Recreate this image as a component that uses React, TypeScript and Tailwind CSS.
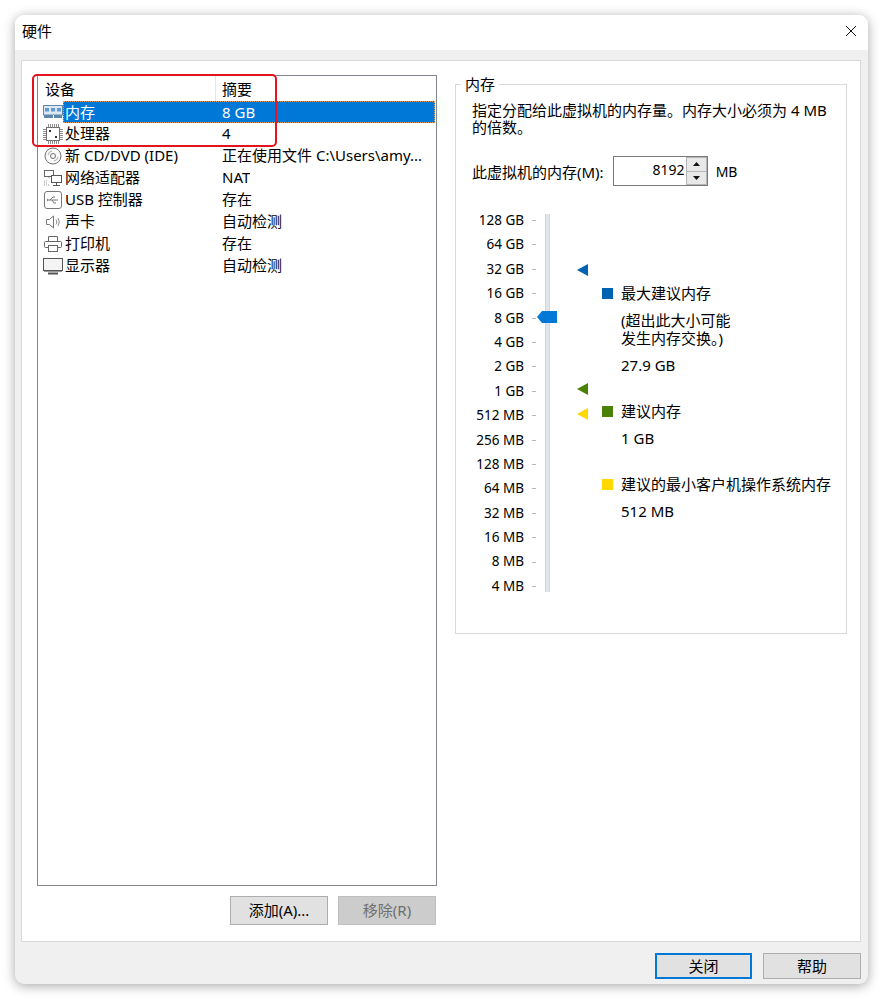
import React from "react";

const Ram = () => (
  <svg width="20" height="14" viewBox="0 0 20 14" fill="none" className="shrink-0">
    <rect x="0.5" y="0.5" width="19" height="9.500" fill="#dce9f5" stroke="#5f86ab" />
    <rect x="2" y="3" width="4" height="3.500" fill="#5f9ad6" />
    <rect x="8" y="3" width="4" height="3.500" fill="#5f9ad6" />
    <rect x="14" y="3" width="4" height="3.500" fill="#5f9ad6" />
    <path d="M1 11.500h18" stroke="#5f86ab" strokeWidth="3" />
    <path d="M10.500 10v4" stroke="#fff" />
  </svg>
);
const Cpu = () => (
  <svg width="20" height="20" viewBox="0 0 20 20" fill="none" className="shrink-0">
    <rect x="3.500" y="3.500" width="13" height="13" fill="#fff" stroke="#6f6f6f" />
    <path d="M5.500 0v3M7.500 0v3M9.500 0v3M11.500 0v3M13.500 0v3M15.500 0v3M5.500 17v3M7.500 17v3M9.500 17v3M11.500 17v3M13.500 17v3M15.500 17v3M0 5.500h3M0 7.500h3M0 9.500h3M0 11.500h3M0 13.500h3M0 15.500h3M17 5.500h3M17 7.500h3M17 9.500h3M17 11.500h3M17 13.500h3M17 15.500h3" stroke="#8f8f8f" />
    <rect x="6" y="6" width="2" height="2" fill="#333" />
    <rect x="12" y="12" width="2" height="2" fill="#333" />
  </svg>
);
const Disc = () => (
  <svg width="18" height="18" viewBox="0 0 18 18" fill="none" className="shrink-0">
    <circle cx="9" cy="9" r="8" fill="#fafafa" stroke="#707070" />
    <circle cx="9" cy="9" r="2.500" stroke="#707070" />
    <path d="M4 8a5 5 0 0 1 4-4M14 10a5 5 0 0 1-4 4" stroke="#a8a8a8" />
  </svg>
);
const Net = () => (
  <svg width="20" height="18" viewBox="0 0 20 18" fill="none" className="shrink-0">
    <rect x="1.500" y="1.500" width="9" height="6" fill="#fff" stroke="#666" />
    <path d="M6 8v2M1 12h4M1 14h4M1 16h6" stroke="#9a9a9a" strokeDasharray="1 1" />
    <rect x="8.500" y="6.500" width="10" height="7" fill="#fff" stroke="#555" />
    <path d="M13.500 14v2M10 16.500h7" stroke="#555" />
  </svg>
);
const Usb = () => (
  <svg width="18" height="18" viewBox="0 0 18 18" fill="none" className="shrink-0">
    <rect x="0.500" y="0.500" width="17" height="17" rx="2.500" fill="#fff" stroke="#777" />
    <path d="M4 9h10M6 9l3-3h2M8 9l2 3h2" stroke="#777" />
    <path d="M4 7.500v3l-1.500-1.500z" fill="#777" />
  </svg>
);
const Speaker = () => (
  <svg width="16" height="16" viewBox="0 0 16 16" fill="none" className="shrink-0">
    <path d="M1.500 5.500h3l4-3.500v12l-4-3.500h-3z" fill="#fff" stroke="#777" />
    <path d="M11 5.500c1 1.500 1 3.500 0 5M13 4c1.500 2.500 1.500 5.500 0 8" stroke="#8a8a8a" />
  </svg>
);
const Printer = () => (
  <svg width="18" height="16" viewBox="0 0 18 16" fill="none" className="shrink-0">
    <path d="M4.500 5V.5h9V5" stroke="#666" fill="#fff" />
    <rect x="0.500" y="5.500" width="17" height="6" rx="1" fill="#fff" stroke="#666" />
    <rect x="4.500" y="9.500" width="9" height="6" fill="#fff" stroke="#666" />
  </svg>
);
const Monitor = () => (
  <svg width="20" height="17" viewBox="0 0 20 17" fill="none" className="shrink-0">
    <rect x="0.500" y="0.500" width="19" height="12" fill="#f4f4f4" stroke="#555" />
    <path d="M5 15.500h10" stroke="#555" strokeWidth="2" />
    <path d="M1 13.500h18" stroke="#999" />
  </svg>
);

const rows: { name: string; value: string; icon: React.ReactNode; sel?: boolean }[] = [
  { name: "内存", value: "8 GB", icon: <Ram />, sel: true },
  { name: "处理器", value: "4", icon: <Cpu /> },
  { name: "新 CD/DVD (IDE)", value: "正在使用文件 C:\\Users\\amy...", icon: <Disc /> },
  { name: "网络适配器", value: "NAT", icon: <Net /> },
  { name: "USB 控制器", value: "存在", icon: <Usb /> },
  { name: "声卡", value: "自动检测", icon: <Speaker /> },
  { name: "打印机", value: "存在", icon: <Printer /> },
  { name: "显示器", value: "自动检测", icon: <Monitor /> },
];

const sizes = ["128 GB","64 GB","32 GB","16 GB","8 GB","4 GB","2 GB","1 GB","512 MB","256 MB","128 MB","64 MB","32 MB","16 MB","8 MB","4 MB"];

const Tri = ({ color, top }: { color: string; top: number }) => (
  <svg width="12" height="12" viewBox="0 0 12 12" className="absolute left-[45px]" style={{ top }}>
    <path d="M0 6L11 0V12Z" fill={color} />
  </svg>
);

export default function App() {
  return (
    <div className="w-[883px] h-[1001px] bg-white pt-[15px] pl-[15px] text-[15px] leading-[20px] text-black font-['Noto_Sans','Noto_Sans_CJK_SC',sans-serif]">
      <div className="relative w-[853px] h-[969px] rounded-[9px] bg-[#f0f0f0] flex flex-col overflow-hidden shadow-[0_2px_12px_rgba(0,0,0,0.35)]">
        <div className="h-[35px] bg-white flex items-center justify-between pl-[7px] pr-[11px] pb-[3px] shrink-0">
          <span>硬件</span>
          <svg width="12" height="12" viewBox="0 0 12 12">
            <path d="M1 1l10 10M11 1L1 11" stroke="#111" strokeWidth="1" />
          </svg>
        </div>
        <div className="mt-[10px] ml-[6px] w-[840px] h-[882px] bg-white border border-[#d9d9d9] flex shrink-0">
          <div className="ml-[15px] mt-[14px] w-[400px] flex flex-col shrink-0">
            <div className="h-[811px] border border-[#828790] flex flex-col">
              <div className="h-[25px] flex items-center shrink-0">
                <div className="w-[178px] h-full pl-[7px] flex items-center border-r border-[#e5e5e5]">设备</div>
                <div className="pl-[6px]">摘要</div>
              </div>
              {rows.map((r) => (
                <div key={r.name} className="h-[22px] flex items-center shrink-0">
                  <div className="w-[25px] flex items-center justify-center pl-[5px] shrink-0">{r.icon}</div>
                  <div className={r.sel ? "flex-1 mr-[1px] h-[22px] flex items-center bg-[#0078d7] text-white border border-dotted border-[#e8a060]" : "flex-1 flex items-center pb-[2px]"}>
                    <div className={r.sel ? "w-[156px] pl-[1px]" : "w-[157px] pl-[2px]"}>{r.name}</div>
                    <div className="truncate pl-[2px]">{r.value}</div>
                  </div>
                </div>
              ))}
            </div>
            <div className="mt-[10px] flex justify-end gap-[10px] pr-[1px]">
              <div className="w-[98px] h-[29px] pb-[2px] bg-[#e1e1e1] border border-[#adadad] flex items-center justify-center">添加(A)...</div>
              <div className="w-[98px] h-[29px] pb-[2px] bg-[#cccccc] border border-[#bfbfbf] text-[#6f6f6f] flex items-center justify-center">移除(R)</div>
            </div>
          </div>
          <div className="relative ml-[18px] mt-[23px] w-[392px] h-[550px] border border-[#d9d9d9] shrink-0 px-[16px]">
            <span className="absolute left-[5px] top-[-11px] bg-white px-[4px]">内存</span>
            <p className="mt-[17px] leading-[17px] w-[360px]">指定分配给此虚拟机的内存量。内存大小必须为 4 MB 的倍数。</p>
            <div className="mt-[20px] flex items-center h-[30px]">
              <span className="pt-[2px]">此虚拟机的内存(M):</span>
              <div className="ml-[9px] w-[95px] h-[30px] border border-[#7a7a7a] flex bg-white text-[14px]">
                <div className="flex-1 text-right pr-[1px] leading-[25px]">8192</div>
                <div className="w-[21px] flex flex-col gap-[1px] p-[1px] bg-[#b5b5b5] shrink-0">
                  <div className="flex-1 bg-[#e8e8e8] flex items-center justify-center"><svg width="7" height="4"><path d="M3.500 0L7 4H0z" fill="#111" /></svg></div>
                  <div className="flex-1 bg-[#e8e8e8] flex items-center justify-center"><svg width="7" height="4"><path d="M0 0H7L3.500 4z" fill="#111" /></svg></div>
                </div>
              </div>
              <span className="ml-[8px] pt-[2px] text-[14px]">MB</span>
            </div>
            <div className="mt-[28px] flex">
              <div className="w-[52px] h-[386px] flex flex-col justify-between text-right mt-[-4px] text-[13.5px] shrink-0">
                {sizes.map((s) => <div key={s} className="h-[20px] whitespace-nowrap">{s}</div>)}
              </div>
              <div className="relative w-[35px] h-[378px] ml-[8px] shrink-0">
                <div className="absolute left-[13px] top-0 w-[5px] h-full bg-[#e1e4e8] border-x border-[#d4d6d8]" />
                {sizes.map((s, i) => (
                  <div key={s} className="absolute left-0 w-[4px] h-px bg-[#b8b8b8]" style={{ top: 6 + i * 24.4 }} />
                ))}
                <svg width="20" height="12" viewBox="0 0 20 12" className="absolute left-[5px] top-[97px]">
                  <path d="M0 6L5 0H20V12H5Z" fill="#0078d7" />
                </svg>
                <Tri color="#0063b1" top={50} />
                <Tri color="#498205" top={169} />
                <Tri color="#ffd800" top={194} />
              </div>
              <div className="ml-[35px] flex flex-col mt-[69px] w-[240px] whitespace-nowrap">
                <div className="flex items-center h-[20px]"><span className="w-[11px] h-[11px] bg-[#0063b1] mr-[8px]" />最大建议内存</div>
                <div className="mt-[8px] ml-[19px] leading-[18px]">(超出此大小可能<br />发生内存交换。)</div>
                <div className="mt-[8px] ml-[19px]">27.9 GB</div>
                <div className="mt-[26px] flex items-center h-[20px]"><span className="w-[11px] h-[11px] bg-[#498205] mr-[8px]" />建议内存</div>
                <div className="mt-[7px] ml-[19px]">1 GB</div>
                <div className="mt-[26px] flex items-center h-[20px]"><span className="w-[11px] h-[11px] bg-[#ffd800] mr-[8px]" />建议的最小客户机操作系统内存</div>
                <div className="mt-[7px] ml-[19px]">512 MB</div>
              </div>
            </div>
          </div>
        </div>
        <div className="mt-[11px] ml-[640px] flex gap-[11px]">
          <div className="w-[97px] h-[26px] bg-[#e1e1e1] border-2 border-[#0078d7] flex items-center justify-center">关闭</div>
          <div className="w-[98px] h-[26px] bg-[#e1e1e1] border border-[#adadad] flex items-center justify-center">帮助</div>
        </div>
        <div className="absolute left-[17px] top-[59px] w-[245px] h-[73px] border-2 border-[#e4141e] rounded-[5px]" />
      </div>
    </div>
  );
}
